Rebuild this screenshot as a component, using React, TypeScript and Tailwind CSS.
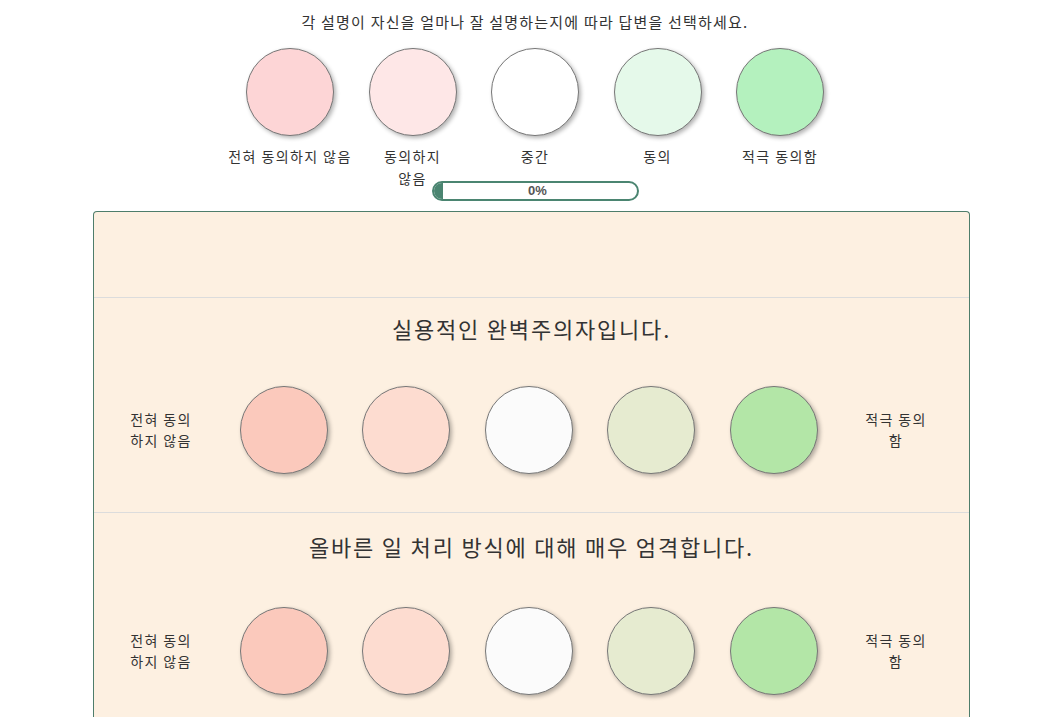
import React from 'react'

const topOptions = [
  { label: ['전혀 동의하지 않음'], color: 'bg-[#fdd5d6]' },
  { label: ['동의하지', '않음'], color: 'bg-[#fee7e7]' },
  { label: ['중간'], color: 'bg-[#ffffff]' },
  { label: ['동의'], color: 'bg-[#e5f9ea]' },
  { label: ['적극 동의함'], color: 'bg-[#b4f1be]' },
]

const scaleColors = [
  'bg-[#fbc9bc]',
  'bg-[#fddcd0]',
  'bg-[#fbfbfb]',
  'bg-[#e6ebd0]',
  'bg-[#b3e6a7]',
]

const statements = [
  { text: '실용적인 완벽주의자입니다.', pad: 'pt-[15px] pb-[38px]', gap: 'mt-[43px]' },
  { text: '올바른 일 처리 방식에 대해 매우 엄격합니다.', pad: 'pt-[18px] pb-[34px]', gap: 'mt-[46px]' },
]

const Circle = ({ color }: { color: string }) => (
  <div
    className={`h-[88px] w-[88px] shrink-0 rounded-full border border-[#777] ${color} shadow-[2px_2px_4px_rgba(0,0,0,0.3)]`}
  />
)

const SideLabel = ({ lines }: { lines: string[] }) => (
  <div className="text-center text-[14px] leading-[21px] tracking-[1.4px] text-[#333]">
    {lines.map((l) => (
      <div key={l} className="whitespace-nowrap">
        {l}
      </div>
    ))}
  </div>
)

export default function App() {
  return (
    <div className="min-h-screen bg-white font-['Noto_Sans_CJK_KR','Noto_Sans',sans-serif] text-[#333]">
      <div className="flex flex-col items-center pt-[11px]">
        <p className="text-[15px] leading-[22px] tracking-[1.2px]">
          각 설명이 자신을 얼마나 잘 설명하는지에 따라 답변을 선택하세요.
        </p>

        {/* legend */}
        <div className="ml-[20px] mt-[15px] flex">
          {topOptions.map((o, i) => (
            <div key={i} className="flex w-[122.5px] flex-col items-center">
              <Circle color={o.color} />
              <div className="mt-[9px] flex h-[24px] flex-col items-center text-[14px] leading-[22px] tracking-[1.4px]">
                {o.label.map((l) => (
                  <span key={l} className="whitespace-nowrap">
                    {l}
                  </span>
                ))}
              </div>
            </div>
          ))}
        </div>

        {/* progress */}
        <div className="ml-[21px] mt-[12px] flex h-[20px] w-[207px] items-center overflow-hidden rounded-full border-2 border-[#4b8571] bg-white">
          <div className="relative flex h-full w-full items-center justify-center">
            <div className="absolute inset-y-0 left-0 w-[9px] bg-[#4b8571]" />
            <span className="relative ml-[4px] font-['Liberation_Sans',sans-serif] text-[13px] font-bold text-[#555]">0%</span>
          </div>
        </div>

        {/* card */}
        <div className="ml-[13px] mt-[10px] w-[877px] rounded-t-[4px] border border-b-0 border-[#4e7d6b] bg-[#fdf0e1]">
          <div className="h-[85px]" />
          {statements.map((s) => (
            <div key={s.text} className={`border-t border-[#dcdcdc] ${s.pad}`}>
              <p className="text-center text-[22px] leading-[30px] tracking-[1.8px] text-[#333]">{s.text}</p>
              <div className={`${s.gap} flex justify-center pr-[6px]`}>
                <div className="flex w-[122.5px] items-center justify-center">
                  <SideLabel lines={['전혀 동의', '하지 않음']} />
                </div>
                {scaleColors.map((c) => (
                  <div key={c} className="flex w-[122.5px] items-center justify-center">
                    <Circle color={c} />
                  </div>
                ))}
                <div className="flex w-[122.5px] items-center justify-center">
                  <SideLabel lines={['적극 동의', '함']} />
                </div>
              </div>
            </div>
          ))}
        </div>
      </div>
    </div>
  )
}
